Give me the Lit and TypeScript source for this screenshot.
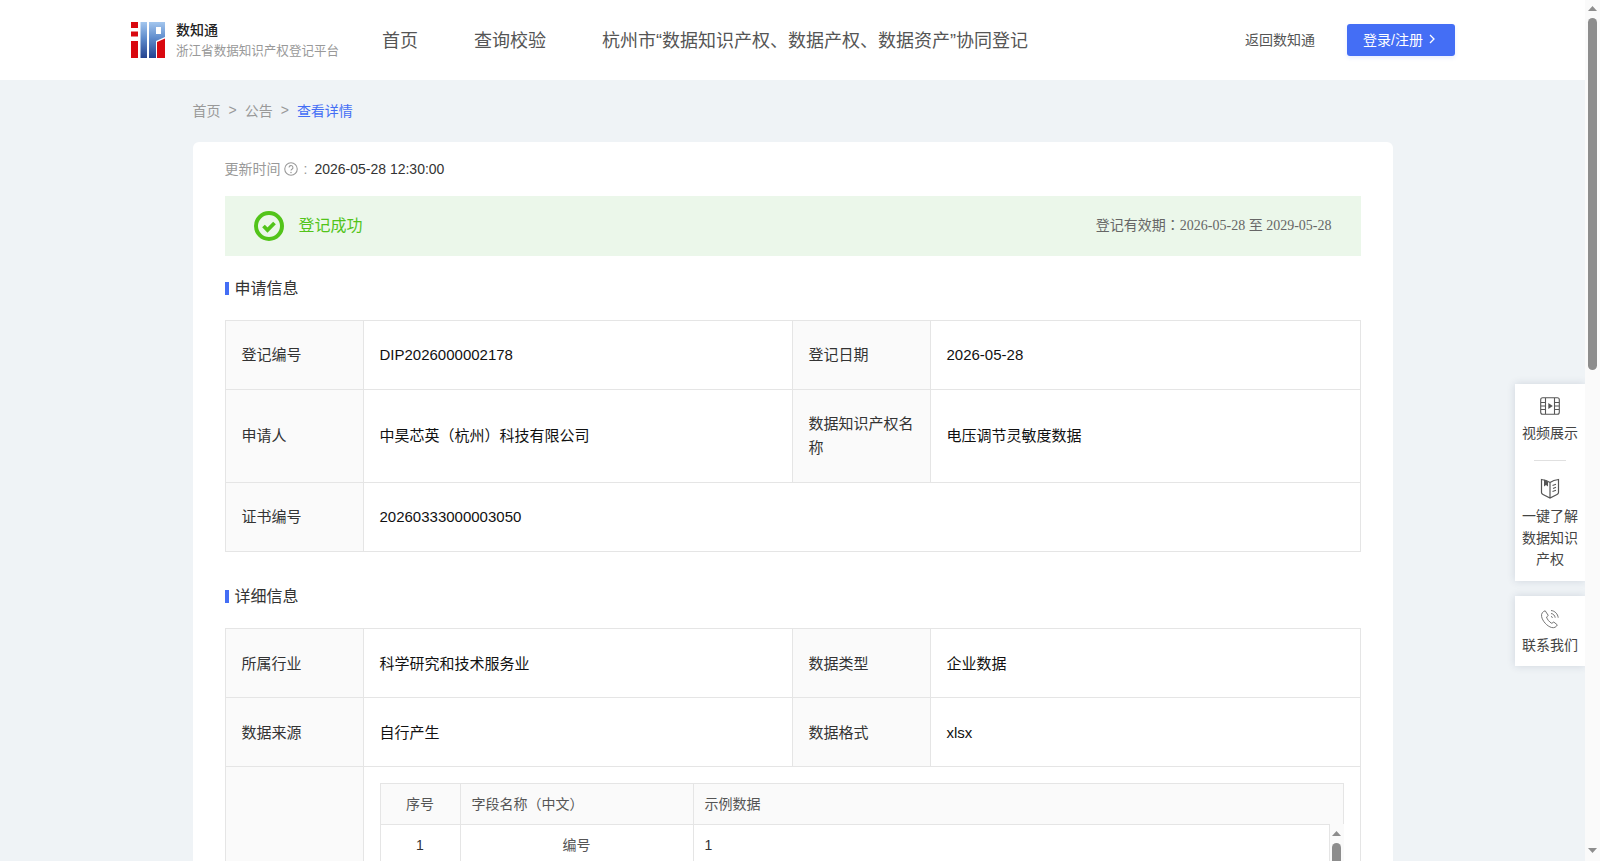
import { LitElement, html, css } from "lit";
import { customElement } from "lit/decorators.js";

@customElement("app-root")
export class AppRoot extends LitElement {
  static styles = css`
    :host {
      display: flex;
      height: 861px;
      overflow: hidden;
      font-family: "Liberation Sans", "Noto Sans CJK SC", sans-serif;
      font-size: 14px;
      color: #333;
      background: #fafafa;
    }
    * { box-sizing: border-box; }
    .page { flex: none; width: 1585px; height: 861px; overflow: hidden; position: relative; background: #eff3f6; }
    .vbar { flex: none; width: 15px; height: 861px; display: flex; flex-direction: column; align-items: center; padding-top: 6px; }
    .vbar svg, .ibar svg { display: block; flex: none; }
    .thumb { width: 9px; background: #8d8d8d; border-radius: 5px; }
    .vbar .thumb { height: 352px; margin-top: 7px; }
    .vbar .down { margin-top: auto; margin-bottom: 8px; }
    .header {
      height: 80px; background: #fff; display: flex; align-items: center;
      padding: 0 130px 0 131px;
    }
    .logo { width: 34px; height: 36px; flex: none; display: block; }
    .brand { margin-left: 11px; display: flex; flex-direction: column; gap: 3px; width: 163px; flex: none; }
    .brand-name { font-size: 14px; line-height: 18px; font-weight: 500; color: #222; }
    .brand-sub { font-size: 12.56px; line-height: 18px; color: #999; white-space: nowrap; }
    .nav { display: flex; margin-left: 15px; }
    .nav-item { padding: 0 28px 2px; font-size: 18px; color: #555; white-space: nowrap; }
    .head-right { margin-left: auto; display: flex; align-items: center; gap: 32px; }
    .back { color: #555; font-size: 14px; padding-bottom: 2px; }
    .login {
      width: 108px; height: 32px; background: #446ef5; color: #fff; border-radius: 3px;
      display: flex; align-items: center; justify-content: center; gap: 6px; font-size: 14px;
      box-shadow: 0 2px 4px rgba(68, 110, 245, .12); padding: 0 4px 2px 0;
    }
    .wrap { width: 1200px; margin: 0 auto; }
    .crumbs { height: 62px; display: flex; align-items: center; color: #999; padding-bottom: 2px; }
    .crumbs .sep { margin: 0 8px; }
    .crumbs .cur { color: #446ef5; }
    .card { background: #fff; border-radius: 6px 6px 0 0; padding: 16px 32px 32px; }
    .updated { height: 22px; display: flex; align-items: center; color: #999; margin-bottom: 16px; }
    .updated .lbl { padding-bottom: 2px; }
    .updated svg { margin-left: 3px; flex: none; }
    .updated .colon { margin: 0 7px 0 6px; }
    .updated .time { color: #333; }
    .status {
      height: 60px; background: #ebf7ea; display: flex; align-items: center; padding: 0 29px 0 29px;
    }
    .status svg { flex: none; }
    .status-txt { margin-left: 15px; font-size: 16px; color: #52c41a; padding-bottom: 4px; }
    .validity { margin-left: auto; color: #666; font-family: "Liberation Serif", "Noto Sans CJK SC", serif; font-size: 14px; padding-bottom: 5px; }
    .validity .fw { font-family: "Noto Sans CJK TC", sans-serif; }
    .title { height: 24px; display: flex; align-items: center; font-size: 16px; color: #333; margin: 20px 0; }
    .title::before { content: ""; width: 4px; height: 13px; background: #446ef5; margin-right: 6px; }
    .title span { padding-bottom: 3px; }
    .title.second { margin-top: 32px; }
    .title.second span { padding-bottom: 2px; }
    table.info { width: 1136px; border-collapse: collapse; table-layout: fixed; font-size: 15px; color: #111; }
    .info td { border: 1px solid #e5e5e5; padding: 22px 16px; line-height: 24px; vertical-align: middle; }
    .info td.k { background: #fafafa; color: #333; }
    .info.low td { padding: 23px 16px 21px; }
    .info.low td.nest { padding: 16px; vertical-align: top; }
    .grid { display: grid; grid-template-columns: 79px 233px 1fr; font-size: 14px; color: #333; }
    .grid > div { display: flex; align-items: center; }
    .head { border: 1px solid #e5e5e5; height: 42px; background: #fafafa; color: #555; }
    .head > div { padding-left: 11px; border-left: 1px solid #e5e5e5; }
    .head > div:first-child { border-left: 0; justify-content: center; padding: 0; }
    .body { display: flex; border-left: 1px solid #e5e5e5; height: 60px; margin-top: -1px; overflow: hidden; }
    .rows { flex: 1; }
    .rowg { height: 42px; border-bottom: 1px solid #e5e5e5; line-height: 22px; }
    .rowg > div { border-left: 1px solid #e5e5e5; }
    .rowg > div:first-child { border-left: 0; justify-content: center; }
    .rowg > div:nth-child(2) { justify-content: center; color: #555; }
    .rowg > div:nth-child(3) { padding-left: 11px; }
    .ibar { flex: none; width: 15px; background: #fafafa; border-left: 1px solid #e5e5e5; display: flex; flex-direction: column; align-items: center; padding-top: 7px; }
    .ibar .thumb { height: 40px; margin-top: 7px; flex: none; }
    .side { position: absolute; right: 0; top: 384px; width: 70px; display: flex; flex-direction: column; gap: 15px; color: #444; }
    .box { background: #fff; box-shadow: 0 0 8px rgba(30, 50, 90, .15); display: flex; flex-direction: column; align-items: center; }
    .box svg { display: block; flex: none; }
    .item { display: flex; flex-direction: column; align-items: center; text-align: center; width: 56px; line-height: 22px; gap: 7px; }
    .v { padding: 13px 0 0; }
    .v.last { padding-bottom: 10px; gap: 5px; }
    .book { padding: 17px 0 10px; line-height: 21.5px; }
    .rule { width: 32px; height: 1px; background: #e0e0e0; margin-top: 16px; }
  `;

  render() {
    return html`
      <div class="page">
        <div class="header">
          <svg class="logo" viewBox="0 0 34 36">
            <defs>
              <linearGradient id="bl" x1="0" y1="0" x2="0" y2="1">
                <stop offset="0" stop-color="#a3c6ee"/><stop offset=".45" stop-color="#5f8ccc"/><stop offset="1" stop-color="#24428f"/>
              </linearGradient>
            </defs>
            <path fill="#d9080f" d="M0 0h7v6H0zM0 9.500h7v5H0zM0 19h7v17H0z"/>
            <rect x="9.500" width="6.500" height="36" fill="url(#bl)"/>
            <path fill="url(#bl)" fill-rule="evenodd" d="M18 0h16v15l-9 4v17h-7zM25 5v7h5V5z"/>
            <path fill="#d9080f" d="M26 20l8-3.500V36h-8z"/>
          </svg>
          <div class="brand">
            <div class="brand-name">数知通</div>
            <div class="brand-sub">浙江省数据知识产权登记平台</div>
          </div>
          <nav class="nav">
            <div class="nav-item">首页</div>
            <div class="nav-item">查询校验</div>
            <div class="nav-item">杭州市“数据知识产权、数据产权、数据资产”协同登记</div>
          </nav>
          <div class="head-right">
            <div class="back">返回数知通</div>
            <div class="login">登录/注册
              <svg width="6" height="10" viewBox="0 0 6 10"><path d="M1 1l4 4-4 4" fill="none" stroke="#fff" stroke-width="1.300"/></svg>
            </div>
          </div>
        </div>
        <div class="wrap">
          <div class="crumbs"><span>首页</span><span class="sep">&gt;</span><span>公告</span><span class="sep">&gt;</span><span class="cur">查看详情</span></div>
          <div class="card">
            <div class="updated"><span class="lbl">更新时间</span>
              <svg width="14" height="14" viewBox="0 0 13 13"><circle cx="6.500" cy="6.500" r="5.800" fill="none" stroke="#999" stroke-width="1"/><path d="M4.700 5.200a1.800 1.800 0 1 1 2.700 1.500c-.6.400-.9.700-.9 1.300" fill="none" stroke="#999"/><circle cx="6.500" cy="9.800" r=".7" fill="#999"/></svg>
              <span class="colon">:</span><span class="time">2026-05-28 12:30:00</span>
            </div>
            <div class="status">
              <svg width="30" height="30" viewBox="0 0 30 30"><circle cx="15" cy="15" r="13" fill="none" stroke="#52c41a" stroke-width="4"/><path d="M9.500 15l4 4 7-7" fill="none" stroke="#52c41a" stroke-width="3.800"/></svg>
              <span class="status-txt">登记成功</span>
              <span class="validity">登记有效期<span class="fw">：</span>2026-05-28 至 2029-05-28</span>
            </div>
            <div class="title"><span>申请信息</span></div>
            <table class="info">
              <colgroup><col style="width:138px"/><col style="width:429px"/><col style="width:138px"/><col/></colgroup>
              <tr><td class="k">登记编号</td><td>DIP2026000002178</td><td class="k">登记日期</td><td>2026-05-28</td></tr>
              <tr><td class="k">申请人</td><td>中昊芯英（杭州）科技有限公司</td><td class="k">数据知识产权名称</td><td>电压调节灵敏度数据</td></tr>
              <tr><td class="k">证书编号</td><td colspan="3">20260333000003050</td></tr>
            </table>
            <div class="title second"><span>详细信息</span></div>
            <table class="info low">
              <colgroup><col style="width:138px"/><col style="width:429px"/><col style="width:138px"/><col/></colgroup>
              <tr><td class="k">所属行业</td><td>科学研究和技术服务业</td><td class="k">数据类型</td><td>企业数据</td></tr>
              <tr><td class="k">数据来源</td><td>自行产生</td><td class="k">数据格式</td><td>xlsx</td></tr>
              <tr>
                <td class="k"></td>
                <td class="nest" colspan="3">
                  <div class="grid head"><div>序号</div><div>字段名称（中文）</div><div>示例数据</div></div>
                  <div class="body">
                    <div class="rows"><div class="grid rowg"><div>1</div><div>编号</div><div>1</div></div></div>
                    <div class="ibar">
                      <svg width="9" height="5" viewBox="0 0 9 5"><path d="M4.500 0L9 5H0z" fill="#8d8d8d"/></svg>
                      <div class="thumb"></div>
                    </div>
                  </div>
                </td>
              </tr>
            </table>
          </div>
        </div>
        <div class="side">
          <div class="box">
            <div class="item v">
              <svg width="20" height="18" viewBox="0 0 20 18" fill="none" stroke="#555" stroke-width="1.100">
                <rect x=".7" y=".7" width="18.600" height="16.600" rx="2"/>
                <path d="M5.500 1v16M14.500 1v16M1 5.500h4.500M1 9h4.500M1 12.500h4.500M14.500 5.500H19M14.500 9H19M14.500 12.500H19"/>
                <path d="M8.300 6l4.500 3-4.500 3z" fill="#555" stroke="none"/>
              </svg>
              <span>视频展示</span>
            </div>
            <div class="rule"></div>
            <div class="item book">
              <svg width="20" height="21" viewBox="0 0 20 21" fill="none" stroke="#555" stroke-width="1.200">
                <path d="M10 4.500C7.500 2.800 4 1.800 1.500 1.500v13c0 1 .5 1.500 1.500 2l7 3.500 7-3.500c1-.5 1.500-1 1.500-2v-13c-2.500.3-6 1.300-8.500 3zM10 4.500V20"/>
                <path d="M4 1.500v7l2-1.500 2 1.500V3.700z" fill="#555" stroke="none"/>
                <path d="M12.500 7.500l3.500-1.200M13 10.500l3-1.200M12.500 13.500l3.500-1.200"/>
              </svg>
              <span>一键了解数据知识产权</span>
            </div>
          </div>
          <div class="box">
            <div class="item v last">
              <svg width="20" height="20" viewBox="0 0 20 20" fill="none" stroke="#666" stroke-width=".9">
                <path d="M5.200 1.800C3 2.500 1 4.200 1.600 7.500c.8 4.500 5.500 9.800 10 11 2.500.7 4.800-.5 5.700-2.600l-3.500-2.900-2 1.300c-2.500-1.200-4.600-3.900-5.300-6.300l1.800-1.500z"/>
                <path d="M11 1.500c3.800.3 6.800 3.400 7.200 7.200M11 4.500c2.200.2 3.900 2 4.200 4.200M11 7.400c.8.100 1.300.7 1.500 1.400"/>
              </svg>
              <span>联系我们</span>
            </div>
          </div>
        </div>
      </div>
      <div class="vbar">
        <svg width="9" height="5" viewBox="0 0 9 5"><path d="M4.500 0L9 5H0z" fill="#8d8d8d"/></svg>
        <div class="thumb"></div>
        <svg class="down" width="9" height="5" viewBox="0 0 9 5"><path d="M0 0h9L4.500 5z" fill="#8d8d8d"/></svg>
      </div>
    `;
  }
}
